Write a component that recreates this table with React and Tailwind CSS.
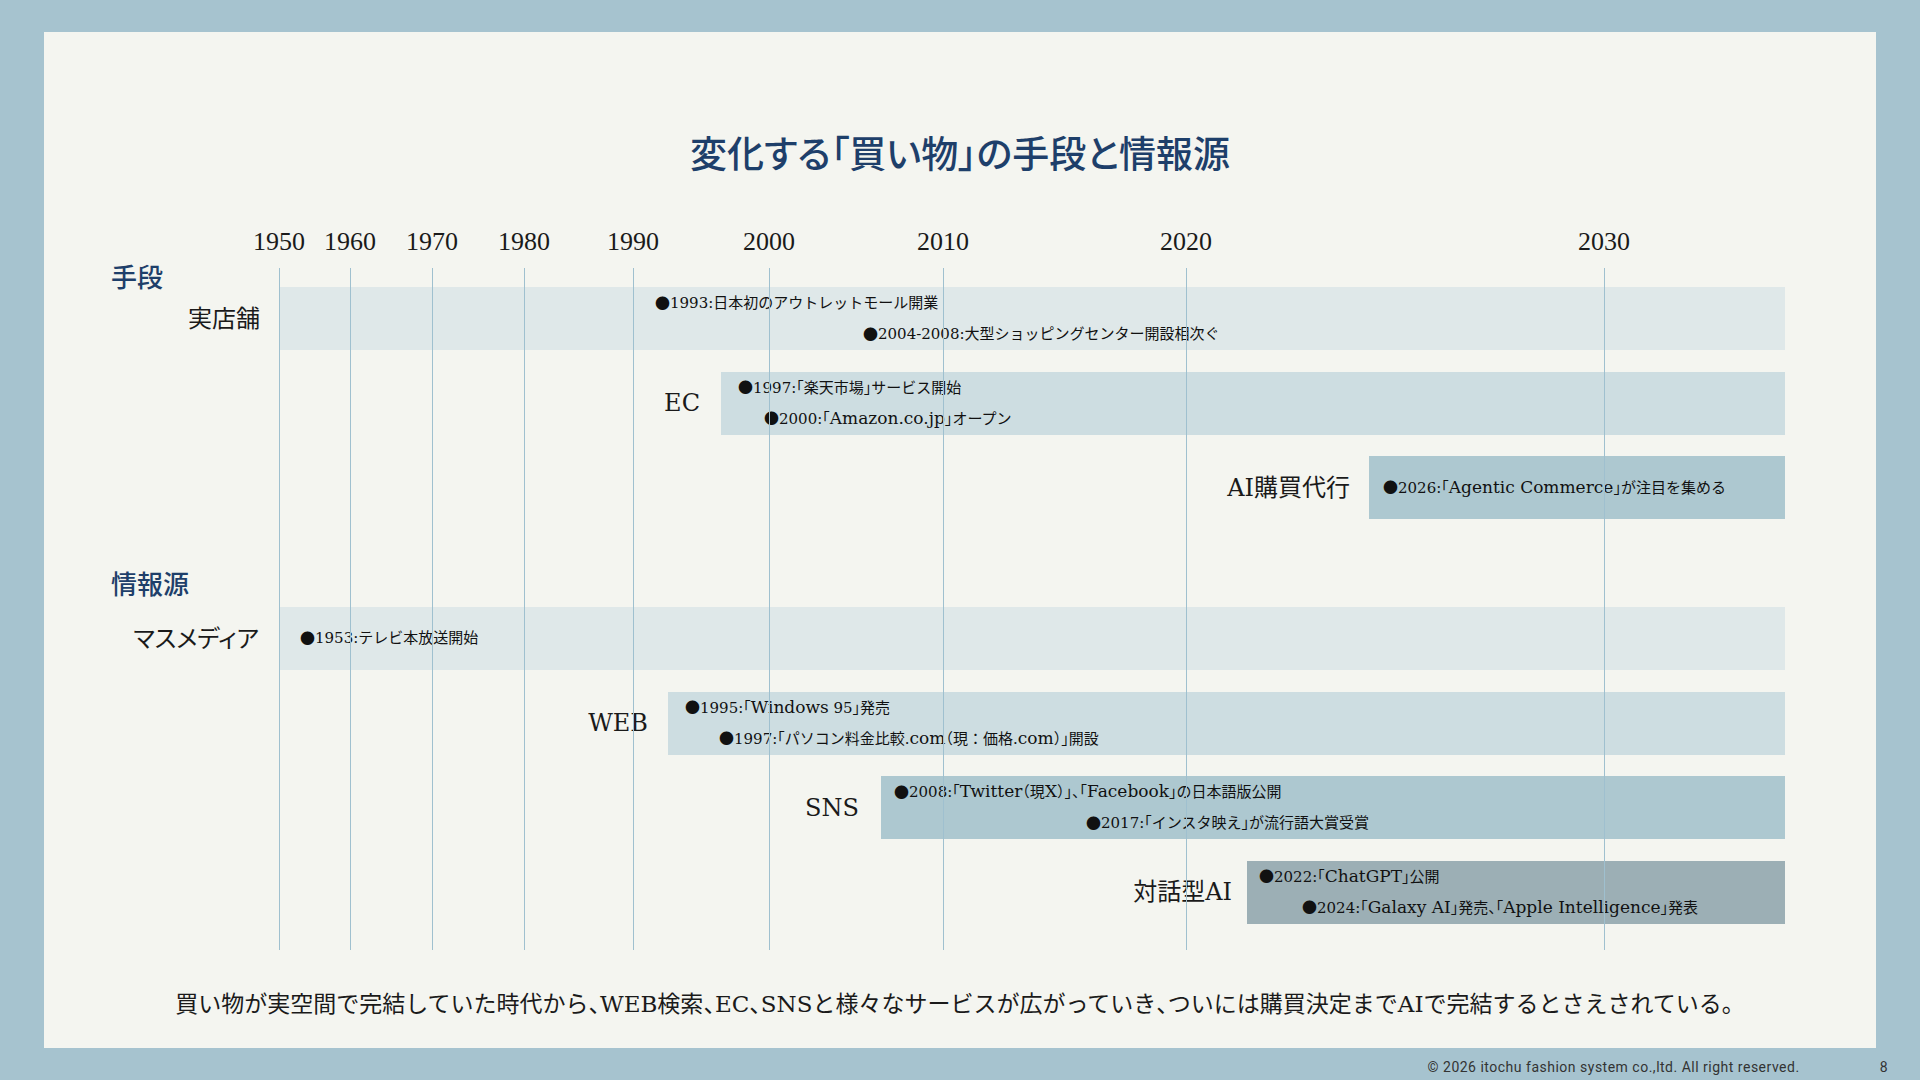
import React from "react";

const YEARS = [
  [1950, 279],
  [1960, 350],
  [1970, 432],
  [1980, 524],
  [1990, 633],
  [2000, 769],
  [2010, 943],
  [2020, 1186],
  [2030, 1604],
];

const PANEL_LEFT = 44;

const GROUPS = [
  {
    title: "手段",
    first: true,
    rows: [
      {
        label: "実店舗",
        left: 280,
        gap: 20,
        color: "bg-[#dfe8e9]",
        events: [
          ["1993:日本初のアウトレットモール開業", 375],
          ["2004-2008:大型ショッピングセンター開設相次ぐ", 583],
        ],
      },
      {
        label: "EC",
        left: 721,
        gap: 21,
        color: "bg-[#cddde1]",
        events: [
          ["1997:「楽天市場」サービス開始", 17],
          ["2000:「Amazon.co.jp」オープン", 43],
        ],
      },
      {
        label: "AI購買代行",
        left: 1369,
        gap: 19,
        color: "bg-[#adc8d0]",
        events: [["2026:「Agentic Commerce」が注目を集める", 14]],
      },
    ],
  },
  {
    title: "情報源",
    rows: [
      {
        label: "マスメディア",
        left: 280,
        gap: 21,
        color: "bg-[#dfe8e9]",
        events: [["1953:テレビ本放送開始", 20]],
      },
      {
        label: "WEB",
        left: 668,
        gap: 20,
        color: "bg-[#cddde1]",
        events: [
          ["1995:「Windows 95」発売", 17],
          ["1997:「パソコン料金比較.com（現：価格.com）」開設", 51],
        ],
      },
      {
        label: "SNS",
        left: 881,
        gap: 22,
        color: "bg-[#adc8d0]",
        events: [
          ["2008:「Twitter（現X）」、「Facebook」の日本語版公開", 13],
          ["2017:「インスタ映え」が流行語大賞受賞", 205],
        ],
      },
      {
        label: "対話型AI",
        left: 1247,
        gap: 15,
        color: "bg-[#9cafb5]",
        events: [
          ["2022:「ChatGPT」公開", 12],
          ["2024:「Galaxy AI」発売、「Apple Intelligence」発表", 55],
        ],
      },
    ],
  },
];

const SERIF = "font-['DejaVu_Serif','Noto_Sans_CJK_JP',serif]";
const HALF = "font-['Noto_Sans_CJK_JP',sans-serif] [font-feature-settings:'halt']";
const HALF_CHARS = ["「", "」", "、", "（"];

// Render CJK brackets / commas with half-width alternates (text stays the same)
function Jp({ text, bigLatin = false }) {
  const parts = text.split(/([「」、（])/);
  return parts.map((p, i) => {
    if (HALF_CHARS.includes(p)) {
      return (
        <span key={i} className={HALF}>
          {p}
        </span>
      );
    }
    if (!bigLatin) return <React.Fragment key={i}>{p}</React.Fragment>;
    const sub = p.split(/([A-Za-z]+(?:[ .][A-Za-z]+)*)/);
    return (
      <React.Fragment key={i}>
        {sub.map((s, j) =>
          /^[A-Za-z]/.test(s) ? (
            <span key={j} className="text-[17px]">
              {s}
            </span>
          ) : (
            <React.Fragment key={j}>{s}</React.Fragment>
          )
        )}
      </React.Fragment>
    );
  });
}

function Row({ row }) {
  return (
    <div className="flex h-[63px] mr-[91px]">
      <div
        className="flex shrink-0 items-center justify-end"
        style={{ width: row.left - PANEL_LEFT, paddingRight: row.gap }}
      >
        <span
          className={`${SERIF} text-[24px] leading-none text-[#1a1a1a] whitespace-nowrap [font-feature-settings:'palt']`}
        >
          {row.label}
        </span>
      </div>
      <div className={`flex flex-1 flex-col justify-center ${row.color}`}>
        {row.events.map(([text, off]) => (
          <div
            key={text}
            className={`${SERIF} h-[31px] flex items-center text-[15px] text-[#111] whitespace-nowrap`}
            style={{ paddingLeft: off }}
          >
            <span className="font-['Noto_Sans_CJK_JP',sans-serif]">●</span>
            <span>
              <Jp text={text} bigLatin />
            </span>
          </div>
        ))}
      </div>
    </div>
  );
}

export default function App() {
  return (
    <div className="w-[1920px] h-[1080px] bg-[#a6c3cf] flex flex-col overflow-hidden">
      <div className="mx-[44px] mt-[32px] h-[1016px] bg-[#f4f5f0] flex flex-col">
        <h1 className="pt-[96px] h-[144px] text-center text-[37px] leading-[48px] font-medium text-[#1e3f6a] font-['Noto_Sans_CJK_JP',sans-serif] [font-feature-settings:'palt']">
          変化する「買い物」の手段と情報源
        </h1>

        <div className="relative mt-[50px] pb-[26px]">
          {/* axis labels */}
          <div className="relative h-[32px]">
            {YEARS.map(([y, x]) => (
              <span
                key={y}
                className="absolute top-0 -translate-x-1/2 font-['Liberation_Serif',serif] text-[26px] leading-[32px] text-[#1a1a1a]"
                style={{ left: x - PANEL_LEFT }}
              >
                {y}
              </span>
            ))}
          </div>

          {/* grid lines */}
          {YEARS.map(([y, x]) => (
            <div
              key={"l" + y}
              className="absolute top-[42px] h-[682px] w-px bg-[#9fc0cf] z-10 pointer-events-none"
              style={{ left: x - PANEL_LEFT }}
            />
          ))}

          <div className="flex flex-col">
            {GROUPS.map((g) => (
              <div key={g.title} className="flex flex-col">
                <div
                  className={
                    g.first
                      ? "h-[29px] pt-[5px] pl-[67px]"
                      : "h-[88px] flex items-end pb-[11px] pl-[67px]"
                  }
                >
                  <span className="text-[26px] leading-[26px] font-medium text-[#1e3f6a] font-['Noto_Sans_CJK_JP',sans-serif]">
                    {g.title}
                  </span>
                </div>
                <div className="flex flex-col gap-[21.5px]">
                  {g.rows.map((r) => (
                    <Row key={r.label} row={r} />
                  ))}
                </div>
              </div>
            ))}
          </div>
        </div>

        <p className={`mt-[36px] text-center ${SERIF} text-[23px] leading-[32px] text-[#1a1a1a] whitespace-nowrap`}>
          <Jp text="買い物が実空間で完結していた時代から、WEB検索、EC、SNSと様々なサービスが広がっていき、ついには購買決定までAIで完結するとさえされている。" />
        </p>
      </div>

      <div className="h-[32px] flex items-center justify-end pt-[6px] pr-[32px] font-['Roboto',sans-serif] text-[14px] tracking-[0.5px] text-[#333]">
        <span>© 2026 itochu fashion system co.,ltd. All right reserved.</span>
        <span className="ml-[80px]">8</span>
      </div>
    </div>
  );
}
